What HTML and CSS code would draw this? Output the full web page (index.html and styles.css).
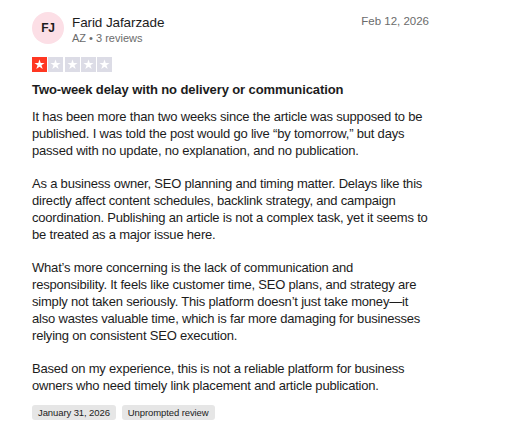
FILE: index.html
```html
<!DOCTYPE html>
<html lang="en">
<head>
<meta charset="utf-8">
<link rel="stylesheet" href="styles.css">
</head>
<body>
<article class="review">
  <header class="head">
    <div class="avatar">FJ</div>
    <div class="who">
      <div class="name">Farid Jafarzade</div>
      <div class="meta">AZ • 3 reviews</div>
    </div>
    <time class="date">Feb 12, 2026</time>
  </header>
  <div class="stars">
    <span class="star on"><svg viewBox="0 0 16 16"><path d="M8 2.6l1.3 3.9h4.1l-3.3 2.4 1.3 3.9L8 10.4l-3.4 2.4 1.3-3.9-3.3-2.4h4.1z"/></svg></span>
    <span class="star"><svg viewBox="0 0 16 16"><path d="M8 2.6l1.3 3.9h4.1l-3.3 2.4 1.3 3.9L8 10.4l-3.4 2.4 1.3-3.9-3.3-2.4h4.1z"/></svg></span>
    <span class="star"><svg viewBox="0 0 16 16"><path d="M8 2.6l1.3 3.9h4.1l-3.3 2.4 1.3 3.9L8 10.4l-3.4 2.4 1.3-3.9-3.3-2.4h4.1z"/></svg></span>
    <span class="star"><svg viewBox="0 0 16 16"><path d="M8 2.6l1.3 3.9h4.1l-3.3 2.4 1.3 3.9L8 10.4l-3.4 2.4 1.3-3.9-3.3-2.4h4.1z"/></svg></span>
    <span class="star"><svg viewBox="0 0 16 16"><path d="M8 2.6l1.3 3.9h4.1l-3.3 2.4 1.3 3.9L8 10.4l-3.4 2.4 1.3-3.9-3.3-2.4h4.1z"/></svg></span>
  </div>
  <h2 class="title">Two-week delay with no delivery or communication</h2>
  <div class="body">
    <p>It has been more than two weeks since the article was supposed to be published. I was told the post would go live “by tomorrow,” but days passed with no update, no explanation, and no publication.</p>
    <p>As a business owner, SEO planning and timing matter. Delays like this directly affect content schedules, backlink strategy, and campaign coordination. Publishing an article is not a complex task, yet it seems to be treated as a major issue here.</p>
    <p>What’s more concerning is the lack of communication and responsibility. It feels like customer time, SEO plans, and strategy are simply not taken seriously. This platform doesn’t just take money—it also wastes valuable time, which is far more damaging for businesses relying on consistent SEO execution.</p>
    <p>Based on my experience, this is not a reliable platform for business owners who need timely link placement and article publication.</p>
  </div>
  <div class="tags">
    <span class="tag">January 31, 2026</span>
    <span class="tag">Unprompted review</span>
  </div>
</article>
</body>
</html>
```
FILE: styles.css
```css
* { box-sizing: border-box; }
html, body { margin: 0; padding: 0; background: #fff; }
body { font-family: "Liberation Sans", Arial, sans-serif; color: #1c1c1c; }
.review { padding: 12px 0 0 32px; width: 474px; }
.head { display: flex; align-items: flex-start; height: 32px; }
.avatar {
  width: 32px; height: 32px; border-radius: 50%; flex: none;
  background: #fcdfe6; color: #1c1c1c;
  display: flex; align-items: center; justify-content: center;
  font-size: 12px; font-weight: 700; letter-spacing: -0.3px;
}
.who { margin-left: 8px; flex: 1; }
.name { font-size: 13.5px; line-height: 17px; margin-top: 2px; letter-spacing: -0.1px; }
.meta { font-size: 11px; color: #6b6b6b; line-height: 15px; margin-top: 0; }
.date { font-size: 11.5px; color: #6b6b6b; line-height: 17px; margin-top: 1px; margin-right: 45px; }
.stars { display: flex; gap: 1.25px; margin-top: 13px; }
.star { width: 15px; height: 15px; background: #dcdce6; display: flex; }
.star.on { background: #ff3722; }
.star svg { width: 15px; height: 15px; fill: #fff; }
.title { font-size: 13px; font-weight: 700; line-height: 17px; margin: 8.5px 0 0; letter-spacing: -0.1px; }
.body { margin-top: 10px; width: 398px; font-size: 13px; line-height: 17px; letter-spacing: -0.2px; }
.body p { margin: 0 0 16px; }
.body p:last-child { margin-bottom: 0; }
.tags { display: flex; gap: 6px; margin-top: 11.5px; }
.tag { background: #e6e6e6; border-radius: 3px; font-size: 9.5px; line-height: 15px; padding: 0 6px; color: #1c1c1c; letter-spacing: -0.1px; }
```
